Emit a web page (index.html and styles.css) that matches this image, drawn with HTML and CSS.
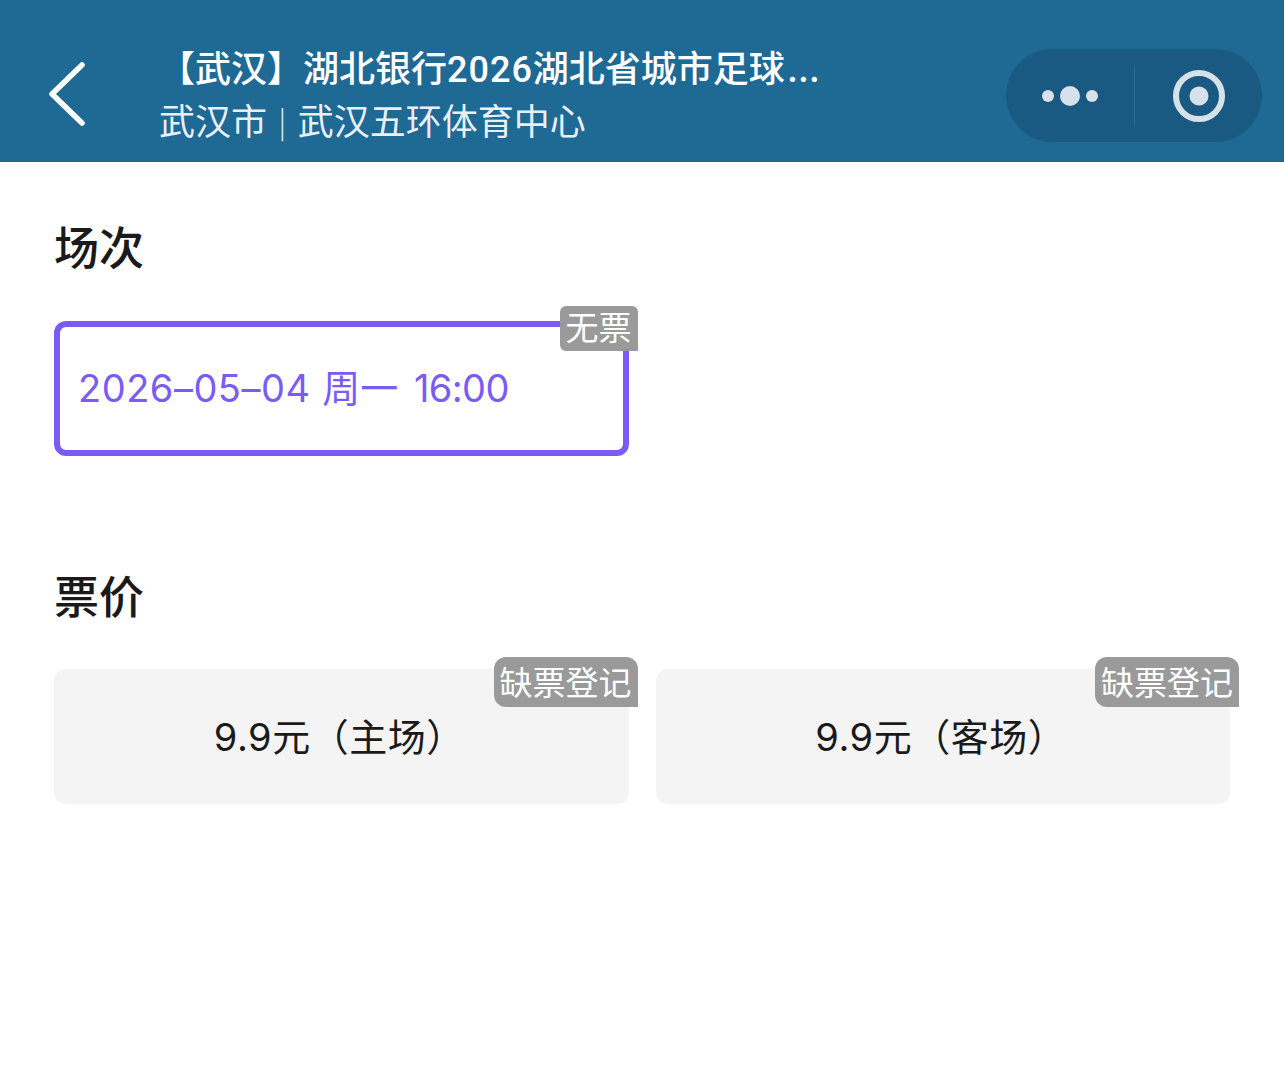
FILE: index.html
```html
<!DOCTYPE html>
<html lang="zh-CN">
<head>
<meta charset="utf-8">
<title>场次票价</title>
<link rel="stylesheet" href="styles.css">
</head>
<body>
<header class="nav">
  <div class="back">
    <svg class="back-icon" width="40" height="66" viewBox="0 0 40 66"><path d="M34 4 L4 33 L34 62" fill="none" stroke="#fff" stroke-width="5.500" stroke-linecap="round" stroke-linejoin="round"/></svg>
  </div>
  <div class="nav-text">
    <div class="nav-title">【武汉】湖北银行<span class="digits">2026</span>湖北省城市足球<span class="more">…</span></div>
    <div class="nav-sub">武汉市<span class="sep">|</span>武汉五环体育中心</div>
  </div>
  <div class="capsule">
    <div class="cap-more">
      <span class="dot"></span><span class="dot dot-big"></span><span class="dot"></span>
    </div>
    <div class="cap-line"></div>
    <div class="cap-close">
      <svg width="52" height="52" viewBox="0 0 52 52"><circle cx="26" cy="26" r="23" fill="none" stroke="#d6e1e9" stroke-width="6"/><circle cx="26" cy="26" r="9.500" fill="#d6e1e9"/></svg>
    </div>
  </div>
</header>
<main class="page">
  <section class="section section-date">
    <h2 class="heading">场次</h2>
    <div class="grid">
      <div class="card card-active">
        <span class="date"><span class="ymd">2026–05–04</span> 周一 <span class="time">16:00</span></span>
        <span class="tag tag-date">无票</span>
      </div>
    </div>
  </section>
  <section class="section section-price">
    <h2 class="heading">票价</h2>
    <div class="grid">
      <div class="card card-price">
        <span class="price">9.9元（主场）</span>
        <span class="tag tag-price">缺票登记</span>
      </div>
      <div class="card card-price">
        <span class="price">9.9元（客场）</span>
        <span class="tag tag-price">缺票登记</span>
      </div>
    </div>
  </section>
</main>
</body>
</html>
```
FILE: styles.css
```css
* { box-sizing: border-box; }
html, body { margin: 0; padding: 0; }
body {
  width: 1284px;
  height: 1091px;
  overflow: hidden;
  background: #fff;
  color: #1a1a1a;
  font-family: "Inter", "Noto Sans CJK SC", sans-serif;
}
.nav {
  height: 162px;
  background: #1f6995;
  display: flex;
  align-items: flex-start;
  color: #fff;
}
.back { width: 159px; padding: 61px 0 0 48px; }
.back-icon { display: block; }
.nav-text { width: 662px; padding-top: 43px; }
.nav-title {
  font-size: 36px;
  font-weight: 500;
  line-height: 52px;
  white-space: nowrap;
}
.digits { font-family: "Roboto", sans-serif; letter-spacing: 1px; }
.more { margin-left: 2px; letter-spacing: 1px; }
.nav-sub { font-size: 36px; line-height: 49px; white-space: nowrap; color: #e9f0f5; }
.sep { font-family: "Noto Sans CJK SC", sans-serif; font-size: 30px; font-weight: 300; margin: 0 11.500px; vertical-align: 2px; }
.capsule {
  margin: 49px 0 0 185px;
  width: 256px;
  height: 93px;
  border-radius: 47px;
  background: #1a5a82;
  display: flex;
  align-items: center;
}
.cap-more { width: 128px; display: flex; align-items: center; justify-content: center; gap: 6px; }
.dot { width: 12px; height: 12px; border-radius: 50%; background: #d6e1e9; }
.dot-big { width: 20px; height: 20px; }
.cap-line { width: 1px; height: 60px; background: #2d6c94; }
.cap-close { flex: 1; display: flex; justify-content: center; }
.cap-close svg { display: block; }
.page { padding: 0 54px; }
.heading { margin: 0; font-size: 45px; font-weight: 500; line-height: 64px; color: #1a1a1a; }
.section-date { padding-top: 55px; }
.section-price { padding-top: 110px; }
.grid { display: grid; grid-template-columns: 1fr 1fr; gap: 27px; }
.section-date .grid { margin-top: 40px; }
.section-price .grid { margin-top: 39px; }
.card { position: relative; height: 135px; border-radius: 12px; font-size: 38px; }
.card-active {
  border: 6px solid #7a5cf5;
  color: #7a5cf5;
  padding: 0 0 6px 18px;
  display: flex;
  align-items: center;
}
.date { white-space: nowrap; word-spacing: 3px; }
.ymd { letter-spacing: 0.5px; margin-right: -2px; }
.time { letter-spacing: -0.6px; margin-left: 2px; }
.card-price {
  background: #f4f4f4;
  display: flex;
  align-items: center;
  justify-content: center;
  padding: 0 4px 5px 0;
}
.price { letter-spacing: 0.5px; }
.tag {
  position: absolute;
  background: #9a9a9a;
  color: #fff;
  font-size: 33px;
  display: flex;
  align-items: center;
  justify-content: center;
  white-space: nowrap;
}
.tag-date {
  top: -21px;
  right: -15px;
  width: 78px;
  height: 45px;
  border-radius: 6px 6px 0 6px;
  padding-bottom: 6px;
}
.tag-price {
  top: -12px;
  right: -9px;
  width: 144px;
  height: 50px;
  border-radius: 12px 12px 0 12px;
  padding-bottom: 2px;
}
```
